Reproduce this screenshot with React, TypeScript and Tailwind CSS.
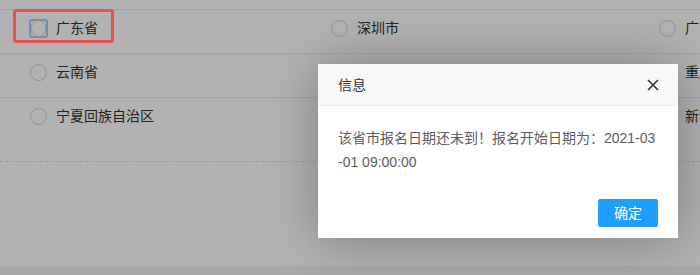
import React from "react";

const rows = [
  ["广东省", "深圳市", "广西壮族自治区"],
  ["云南省", "昆明市", "重庆市"],
  ["宁夏回族自治区", "银川市", "新疆维吾尔自治区"],
];

const Radio = ({ label, focused }: { label: string; focused?: boolean }) => (
  <label className="flex h-5 items-center gap-[8px] whitespace-nowrap">
    <span
      className={
        focused
          ? "flex size-[19px] items-center justify-center rounded-[3px] border-2 border-[#a9c8f8]"
          : "flex size-[19px] items-center justify-center"
      }
    >
      <span className="block size-[17px] rounded-full border border-[#d2d2d2] bg-white" />
    </span>
    <span>{label}</span>
  </label>
);

export default function App() {
  return (
    <div
      className="relative h-[275px] w-[700px] overflow-hidden bg-white text-[14px] text-[#333]"
      style={{ fontFamily: '"Liberation Sans", "Noto Sans CJK SC", sans-serif' }}
    >
      {/* page */}
      <div className="flex h-full flex-col pt-[9px]">
        {rows.map((r, i) => (
          <div
            key={i}
            className="grid h-[44px] grid-cols-[301px_328px_1fr] overflow-hidden border-t border-[#eeeeee] pl-[29px] pt-[8px]"
          >
            {r.map((c, j) => (
              <Radio key={j} label={c} focused={i === 0 && j === 0} />
            ))}
          </div>
        ))}
        <div className="mt-[20px] flex-1 border-t border-dashed border-[#e0e0e0]" />
        <div className="h-[9px] bg-[#f3f3f3]" />
      </div>

      {/* shade */}
      <div className="absolute inset-0 bg-black/30" />

      {/* highlight annotation */}
      <div className="absolute left-[13px] top-[9px] h-[34px] w-[101px] rounded-[3px] border-[3px] border-[#e8514f]" />

      {/* dialog */}
      <div className="absolute left-[318px] top-[64px] w-[360px] bg-white shadow-[1px_1px_50px_rgba(0,0,0,0.3)]">
        <div className="relative h-[42px] border-b border-[#eeeeee] bg-[#f8f8f8] pl-[20px] leading-[42px] text-[#333]">
          信息
          <svg
            className="absolute right-[19px] top-[15px]"
            width="12"
            height="12"
            viewBox="0 0 12 12"
          >
            <path d="M1 1 L11 11 M11 1 L1 11" stroke="#333" strokeWidth="1.6" />
          </svg>
        </div>
        <div className="break-all p-[20px] leading-[24px] text-[#5c5c5c]">
          该省市报名日期还未到！报名开始日期为：2021-03-01 09:00:00
        </div>
        <div className="flex justify-end px-[15px] pb-[11px]">
          <button className="mt-[5px] mr-[5px] h-[28px] rounded-[2px] border border-[#1e9fff] bg-[#1e9fff] px-[15px] leading-[26px] text-white">
            确定
          </button>
        </div>
      </div>
    </div>
  );
}
